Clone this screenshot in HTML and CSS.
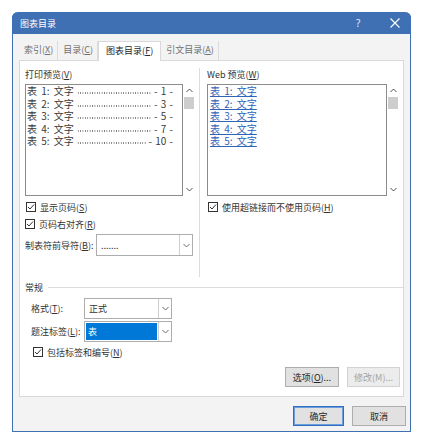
FILE: index.html
```html
<!DOCTYPE html>
<html lang="zh-CN">
<head>
<meta charset="utf-8">
<title>图表目录</title>
<link rel="stylesheet" href="styles.css">
</head>
<body>
<div class="dialog">
  <div class="titlebar">
    <span class="title">图表目录</span>
    <span class="help">?</span>
    <span class="close"><svg width="10" height="10" viewBox="0 0 10 10"><path d="M0.5 0.5L9.5 9.5M9.5 0.5L0.5 9.5" stroke="#fff" stroke-width="1.1" fill="none"/></svg></span>
  </div>
  <div class="tabs">
    <div class="tab">索引(<u>X</u>)</div>
    <div class="tab">目录(<u>C</u>)</div>
    <div class="tab active">图表目录(<u>F</u>)</div>
    <div class="tab">引文目录(<u>A</u>)</div>
  </div>
  <div class="panel">
    <div class="top">
      <div class="col left">
        <div class="label">打印预览(<u>V</u>)</div>
        <div class="listwrap">
          <div class="list">
            <div class="row"><span class="cap">表 1: 文字</span><span class="dots"></span><span class="pg">- 1 -</span></div>
            <div class="row"><span class="cap">表 2: 文字</span><span class="dots"></span><span class="pg">- 3 -</span></div>
            <div class="row"><span class="cap">表 3: 文字</span><span class="dots"></span><span class="pg">- 5 -</span></div>
            <div class="row"><span class="cap">表 4: 文字</span><span class="dots"></span><span class="pg">- 7 -</span></div>
            <div class="row"><span class="cap">表 5: 文字</span><span class="dots"></span><span class="pg">- 10 -</span></div>
          </div>
          <div class="scroll">
            <svg class="arr" width="7" height="5" viewBox="0 0 7 5"><path d="M0.5 4L3.5 1L6.5 4" stroke="#555" fill="none"/></svg>
            <div class="thumb"></div>
            <div class="fill"></div>
            <svg class="arr" width="7" height="5" viewBox="0 0 7 5"><path d="M0.5 1L3.5 4L6.5 1" stroke="#555" fill="none"/></svg>
          </div>
        </div>
        <div class="check first"><svg width="10" height="10" viewBox="0 0 10 10"><rect x="0.5" y="0.5" width="9" height="9" fill="#fff" stroke="#333"/><path d="M2 5L4 7L8 2.5" stroke="#333" fill="none"/></svg><span>显示页码(<u>S</u>)</span></div>
        <div class="check"><svg width="10" height="10" viewBox="0 0 10 10"><rect x="0.5" y="0.5" width="9" height="9" fill="#fff" stroke="#333"/><path d="M2 5L4 7L8 2.5" stroke="#333" fill="none"/></svg><span>页码右对齐(<u>R</u>)</span></div>
        <div class="field leader">
          <span class="flabel">制表符前导符(<u>B</u>):</span>
          <div class="combo w97"><span class="val">.......</span><span class="drop"><svg width="7" height="5" viewBox="0 0 7 5"><path d="M0.5 1L3.5 4L6.5 1" stroke="#666" fill="none"/></svg></span></div>
        </div>
      </div>
      <div class="sep"></div>
      <div class="col right">
        <div class="label">Web 预览(<u>W</u>)</div>
        <div class="listwrap">
          <div class="list web">
            <div class="row"><a class="link">表 1: 文字</a></div>
            <div class="row"><a class="link">表 2: 文字</a></div>
            <div class="row"><a class="link">表 3: 文字</a></div>
            <div class="row"><a class="link">表 4: 文字</a></div>
            <div class="row"><a class="link">表 5: 文字</a></div>
          </div>
          <div class="scroll">
            <svg class="arr" width="7" height="5" viewBox="0 0 7 5"><path d="M0.5 4L3.5 1L6.5 4" stroke="#555" fill="none"/></svg>
            <div class="thumb"></div>
            <div class="fill"></div>
            <svg class="arr" width="7" height="5" viewBox="0 0 7 5"><path d="M0.5 1L3.5 4L6.5 1" stroke="#555" fill="none"/></svg>
          </div>
        </div>
        <div class="check first"><svg width="10" height="10" viewBox="0 0 10 10"><rect x="0.5" y="0.5" width="9" height="9" fill="#fff" stroke="#333"/><path d="M2 5L4 7L8 2.5" stroke="#333" fill="none"/></svg><span>使用超链接而不使用页码(<u>H</u>)</span></div>
      </div>
    </div>
    <div class="group">
      <div class="legend"><span>常规</span><span class="line"></span></div>
      <div class="grow">
        <span class="glabel">格式(<u>T</u>):</span>
        <div class="combo w88"><span class="val">正式</span><span class="drop"><svg width="7" height="5" viewBox="0 0 7 5"><path d="M0.5 1L3.5 4L6.5 1" stroke="#666" fill="none"/></svg></span></div>
      </div>
      <div class="grow second">
        <span class="glabel">题注标签(<u>L</u>):</span>
        <div class="combo w88"><span class="val sel">表</span><span class="drop"><svg width="7" height="5" viewBox="0 0 7 5"><path d="M0.5 1L3.5 4L6.5 1" stroke="#666" fill="none"/></svg></span></div>
      </div>
      <div class="check incl"><svg width="10" height="10" viewBox="0 0 10 10"><rect x="0.5" y="0.5" width="9" height="9" fill="#fff" stroke="#333"/><path d="M2 5L4 7L8 2.5" stroke="#333" fill="none"/></svg><span>包括标签和编号(<u>N</u>)</span></div>
    </div>
    <div class="btnrow">
      <div class="btn w54">选项(<u>O</u>)...</div>
      <div class="btn w53 disabled">修改(M)...</div>
    </div>
  </div>
  <div class="footer">
    <div class="btn w51 primary">确定</div>
    <div class="btn w54">取消</div>
  </div>
</div>
</body>
</html>
```

FILE: styles.css
```css
html, body {
  margin: 0;
  padding: 0;
  background: #ffffff;
}
body {
  font-family: "Noto Sans CJK SC", "Noto Sans", "Liberation Sans", sans-serif;
  font-size: 9px;
  color: #333;
}
u {
  text-decoration: underline;
  text-underline-offset: 1px;
}
.dialog {
  margin: 12px 0 0 12px;
  width: 399px;
  height: 420px;
  box-sizing: border-box;
  border: 1px solid #3f70b3;
  border-top: none;
  border-radius: 6px 6px 0 0;
  background: #f3f3f3;
  display: flex;
  flex-direction: column;
}
.titlebar {
  height: 22px;
  margin: 0 -1px;
  background: #3f70b3;
  border-radius: 6px 6px 0 0;
  color: #fff;
  display: flex;
  align-items: center;
  padding-left: 8px;
}
.title {
  font-size: 9px;
}
.help {
  margin-left: auto;
  font-size: 10px;
  width: 10px;
  font-family: "Noto Sans", sans-serif;
  color: #e6eef8;
}
.close {
  display: flex;
  margin-left: 24px;
  margin-right: 11px;
}
.tabs {
  display: flex;
  margin-top: 7px;
  padding-left: 6px;
  height: 19px;
}
.tab {
  padding: 0 4px 0 5px;
  line-height: 18px;
  color: #707070;
  border-right: 1px solid #dcdcdc;
  box-sizing: border-box;
  height: 19px;
}
.tab.active {
  background: #fff;
  color: #262626;
  border: 1px solid #d9d9d9;
  border-bottom: none;
  height: 20px;
  padding: 0 7px 0 7px;
  line-height: 18px;
  position: relative;
  z-index: 1;
}
.panel {
  margin: 0 6px;
  height: 337px;
  box-sizing: border-box;
  border: 1px solid #d9d9d9;
  background: #fff;
  display: flex;
  flex-direction: column;
}
.top {
  display: flex;
  height: 216px;
  box-sizing: border-box;
  padding: 7px 3px 0 5px;
}
.col.left {
  width: 170px;
}
.col.right {
  width: 192px;
}
.sep {
  width: 1px;
  background: #dcdcdc;
  margin: 0 7px 0 4px;
}
.label {
  height: 14px;
  line-height: 14px;
}
.listwrap {
  display: flex;
  margin-top: 2px;
  height: 112px;
}
.list {
  width: 158px;
  box-sizing: border-box;
  border: 1px solid #8c8c8c;
  padding: 0 9px 0 1px;
  font-size: 10px;
  color: #3a3a3a;
}
.list.web {
  width: 180px;
  padding: 0 2px;
}
.row {
  display: flex;
  height: 12.5px;
  line-height: 12.5px;
  white-space: nowrap;
  word-spacing: 2px;
}
.cap {
  flex: none;
}
.dots {
  flex: 1;
  margin: 0 2px 0 3px;
  height: 9px;
  background-image: radial-gradient(circle, #777 0.55px, transparent 0.75px);
  background-size: 2.4px 2px;
  background-repeat: repeat-x;
  background-position: left bottom;
}
.pg {
  flex: none;
  word-spacing: 1px;
}
.link {
  color: #2f63b8;
  text-decoration: underline;
  text-underline-offset: 1px;
}
.scroll {
  width: 12px;
  display: flex;
  flex-direction: column;
  align-items: center;
}
.arr {
  margin: 4px 0;
}
.thumb {
  width: 10px;
  height: 12px;
  background: #cdcdcd;
}
.fill {
  flex: 1;
}
.check {
  display: flex;
  align-items: center;
  height: 14px;
  margin-top: 3px;
}
.check.first {
  margin-top: 4px;
  padding-left: 1px;
}
.check svg {
  flex: none;
  margin-right: 4px;
}
.field {
  display: flex;
  align-items: center;
  margin-top: 3px;
}
.flabel {
  width: 71px;
}
.combo {
  height: 22px;
  box-sizing: border-box;
  border: 1px solid #adadad;
  background: #fff;
  display: flex;
  align-items: stretch;
}
.combo.w97 {
  width: 97px;
}
.combo.w88 {
  width: 88px;
  height: 21px;
}
.val {
  flex: 1;
  display: flex;
  align-items: center;
  padding-left: 4px;
}
.val.sel {
  background: #0078d7;
  color: #fff;
  margin: 1px;
  padding-left: 2px;
}
.drop {
  width: 12px;
  border-left: 1px solid #cfcfcf;
  display: flex;
  align-items: center;
  justify-content: center;
}
.group {
  padding: 3px 0 0 5px;
}
.legend {
  display: flex;
  align-items: center;
  height: 14px;
}
.legend .line {
  flex: 1;
  height: 1px;
  background: #dcdcdc;
  margin-left: 5px;
}
.grow {
  display: flex;
  align-items: center;
  margin-top: 4px;
  padding-left: 6px;
}
.grow.second {
  margin-top: 2px;
}
.glabel {
  width: 53px;
}
.check.incl {
  padding-left: 8px;
}
.btnrow {
  display: flex;
  justify-content: flex-end;
  gap: 8px;
  margin-top: 8px;
  padding-right: 3px;
}
.btn {
  height: 20px;
  box-sizing: border-box;
  border: 1px solid #adadad;
  background: #e1e1e1;
  display: flex;
  align-items: center;
  justify-content: center;
  color: #262626;
}
.btn.w54 { width: 54px; }
.btn.w53 { width: 53px; }
.btn.w51 { width: 51px; }
.btn.disabled {
  background: #ececec;
  border-color: #d2d2d2;
  color: #a3a3a3;
}
.btn.primary {
  border-color: #2f6ec2;
  box-shadow: inset 0 0 0 1px #6d9fdc;
}
.footer {
  display: flex;
  justify-content: flex-end;
  gap: 8px;
  margin-top: 9px;
  padding-right: 4px;
}
```
